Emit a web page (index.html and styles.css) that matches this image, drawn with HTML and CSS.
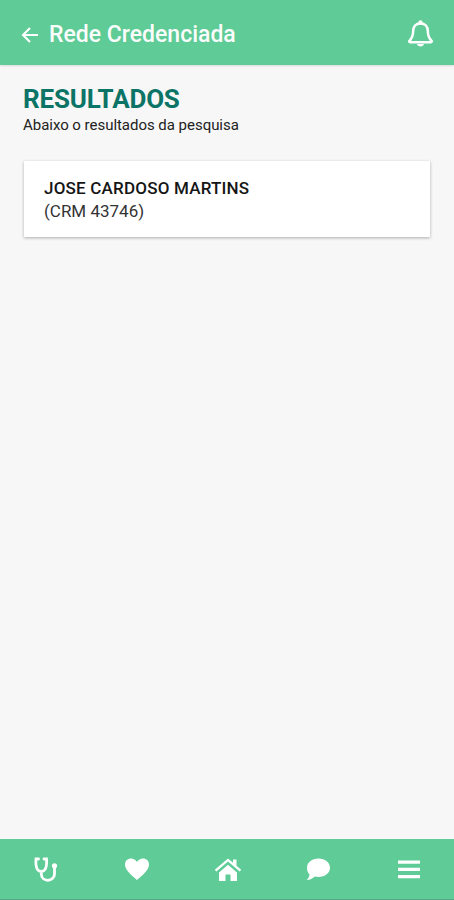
FILE: index.html
```html
<!DOCTYPE html>
<html lang="pt">
<head>
<meta charset="utf-8">
<title>Rede Credenciada</title>
<link rel="stylesheet" href="styles.css">
</head>
<body>
<div class="app">
  <header class="topbar">
    <div class="topbar-left">
      <svg class="back" viewBox="0 0 20 20" width="20" height="20"><path d="M18 10H3M10 3l-7 7 7 7" fill="none" stroke="#fff" stroke-width="2.100"/></svg>
      <span class="title">Rede Credenciada</span>
    </div>
    <svg class="bell" viewBox="0 0 28 30" width="27" height="29"><path d="M14 4.500c-5 0-7.600 3.300-7.600 8 0 5.500-1.200 7.500-3.900 10.200-.5.600-.1 1.300.6 1.300h21.800c.7 0 1.100-.7.600-1.300-2.700-2.700-3.900-4.700-3.900-10.200 0-4.700-2.600-8-7.600-8z" fill="none" stroke="#fff" stroke-width="2.600" stroke-linejoin="round"/><circle cx="14" cy="3.500" r="2.200" fill="#fff"/><path d="M10.500 26h7c0 1.500-1.500 2.500-3.500 2.500s-3.500-1-3.500-2.500z" fill="#fff"/></svg>
  </header>
  <main class="content">
    <h1 class="heading">RESULTADOS</h1>
    <p class="sub">Abaixo o resultados da pesquisa</p>
    <article class="card">
      <div class="name">JOSE CARDOSO MARTINS</div>
      <div class="crm">(CRM 43746)</div>
    </article>
  </main>
  <nav class="tabbar">
    <svg class="tab" viewBox="0 0 28 28" width="28" height="28"><path d="M6.500 4H4C3.500 9 4 12 5.500 14.500c1.700 2.600 5.800 2.600 7.500 0C14.500 12 15 9 14.500 4H12M9.300 16.500v2.500c0 3.800 3 6.300 6.500 6.300s6.700-2.500 6.700-6.300v-5.500" fill="none" stroke="#fff" stroke-width="2.800" stroke-linecap="round"/><circle cx="22.500" cy="10.800" r="2.600" fill="#fff"/></svg>
    <svg class="tab" viewBox="0 0 28 28" width="28" height="28"><path d="M14 25C9 20.500 2 15.500 2 9.500 2 5.800 4.800 3.500 8 3.500c2.500 0 4.700 1.300 6 3.500 1.300-2.200 3.500-3.500 6-3.500 3.200 0 6 2.300 6 6 0 6-7 11-12 15.500z" fill="#fff"/></svg>
    <svg class="tab" viewBox="0 0 28 28" width="28" height="28"><path d="M14 3.500L0.800 14.800l1.500 1.700L14 6.500l11.700 10 1.500-1.700L22.500 10.800V4.500h-3.500v3.300zM5 17.500V26h6.500v-6.500h5V26H23v-8.500L14 9.800z" fill="#fff"/></svg>
    <svg class="tab" viewBox="0 0 28 28" width="28" height="28"><path d="M14.500 3.500C21 3.500 26 7.500 26 12.700s-5 9.300-11.500 9.300c-1.300 0-2.500-.1-3.600-.4C8.800 23.500 6 25 2.800 25c1.500-1.500 2.500-3.300 2.800-5.400C3.900 18 3 15.400 3 12.700 3 7.500 8 3.500 14.500 3.500z" fill="#fff"/></svg>
    <svg class="tab" viewBox="0 0 28 28" width="28" height="28"><path d="M3 5.500h22v3.300H3zM3 12.700h22v3.300H3zM3 20h22v3.300H3z" fill="#fff"/></svg>
  </nav>
</div>
</body>
</html>
```
FILE: styles.css
```css
* { box-sizing: border-box; }
html, body { margin: 0; padding: 0; height: 100%; }
body { font-family: Roboto, "Liberation Sans", sans-serif; background: #f7f7f7; }
.app { width: 454px; height: 900px; display: flex; flex-direction: column; overflow: hidden; }
.topbar {
  height: 65px; flex: none; background: #5fcb96; display: flex; align-items: center;
  justify-content: space-between; padding: 5px 20px 0 20px;
  box-shadow: 0 1px 2px rgba(0,0,0,.12);
}
.topbar-left { display: flex; align-items: center; gap: 9px; }
.title { color: #fff; font-size: 23px; font-weight: 500; line-height: 30px; opacity: .97; }
.bell { margin-top: -3px; }
.content { flex: 1; padding: 20px 23px 0; display: flex; flex-direction: column; }
.heading { margin: 0; font-size: 26px; line-height: 29px; font-weight: 700; color: #0b7466; letter-spacing: -.2px; }
.sub { margin: 1px 0 0; font-size: 15px; line-height: 20px; color: #222; letter-spacing: -.03px; }
.card {
  margin: 26px 0 0 1px; width: 406px; height: 76px; background: #fff; padding: 16px 20px 0;
  box-shadow: 0 1px 3px rgba(0,0,0,.3);
}
.name { font-size: 17px; line-height: 22px; font-weight: 500; color: #151515; letter-spacing: .2px; }
.crm { font-size: 17px; line-height: 25px; color: #333; }
.tabbar {
  height: 61px; flex: none; background: #5fcb96; display: flex; align-items: center;
  justify-content: space-between; padding: 0 31px 0 32px; border-bottom: 1px solid #55a883;
}
.tab { flex: none; }
```
